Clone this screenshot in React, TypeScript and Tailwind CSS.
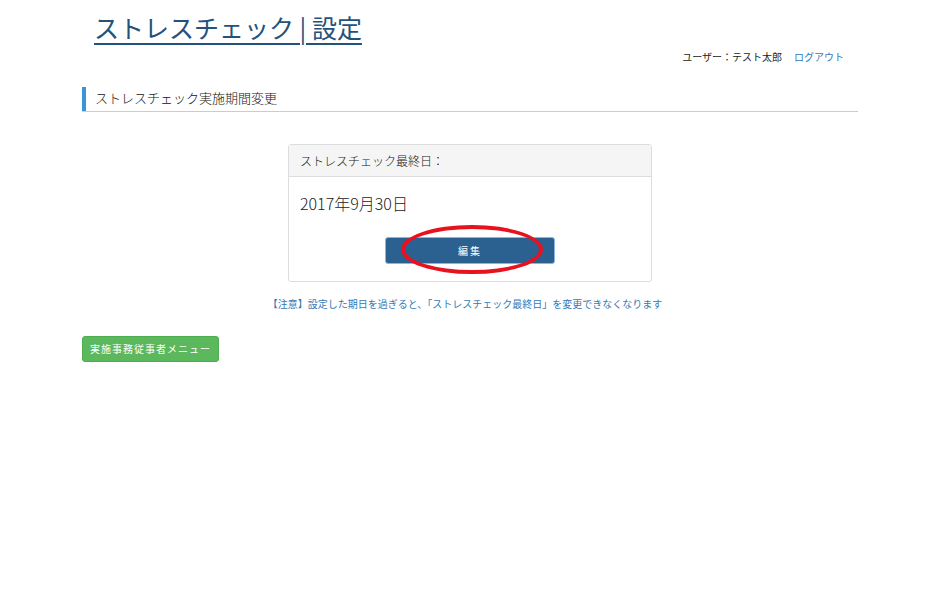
export default function App() {
  const font = { fontFamily: '"Noto Sans CJK JP", "Liberation Sans", sans-serif' };
  return (
    <div className="w-[941px] h-[593px] bg-white text-[#333]" style={font}>
      <div className="w-[776px] ml-[82px]">
        <h1 className="pl-3 pt-[9px] text-[25px] leading-[36px] font-normal text-[#23527c] underline underline-offset-[5px] decoration-[2px]">
          ストレスチェック | 設定
        </h1>
        <div className="flex justify-end pr-[14px] mt-[5px] text-[10px] leading-[14px]">
          <span className="text-[#222]">ユーザー：テスト太郎</span>
          <span className="ml-[12px] text-[#337ab7]">ログアウト</span>
        </div>
        <div className="mt-[23px] border-b border-[#cccccc] flex">
          <div className="border-l-[4px] border-[#3a95d8] pl-[9px] pb-[3px] text-[13px] leading-[21px] font-light text-[#111]">
            ストレスチェック実施期間変更
          </div>
        </div>
        <div className="mt-[32px] flex justify-center">
          <div className="w-[364px] border border-[#dddddd] rounded-[3px]">
            <div className="bg-[#f5f5f5] border-b border-[#dddddd] h-[32px] px-[11px] flex items-center text-[12px] font-light text-[#222]">
              ストレスチェック最終日：
            </div>
            <div className="px-[11px] pt-[14px] pb-[17px]">
              <div className="text-[16px] leading-[24px] font-light text-[#222]">2017年9月30日</div>
              <div className="flex justify-center mt-[21px]">
                <div className="relative">
                  <button className="w-[170px] h-[27px] bg-[#2b6190] border border-[#8ab4e8] rounded-[3px] text-white text-[10px] tracking-[2px]">
                    編集
                  </button>
                  <div className="absolute left-[16px] top-[-11px] w-[142px] h-[49px] rounded-[50%] border-[4px] border-[#e8121f]" />
                </div>
              </div>
            </div>
          </div>
        </div>
        <div className="mt-[14px] text-center pr-[10px] text-[10px] leading-[16px] text-[#337ab7]">
          【注意】設定した期日を過ぎると、「ストレスチェック最終日」を変更できなくなります
        </div>
        <div className="mt-[22px]">
          <button className="w-[137px] h-[26px] bg-[#5cb85c] border border-[#4cae4c] rounded-[3px] text-white text-[10px] tracking-[1px]">
            実施事務従事者メニュー
          </button>
        </div>
      </div>
    </div>
  );
}
